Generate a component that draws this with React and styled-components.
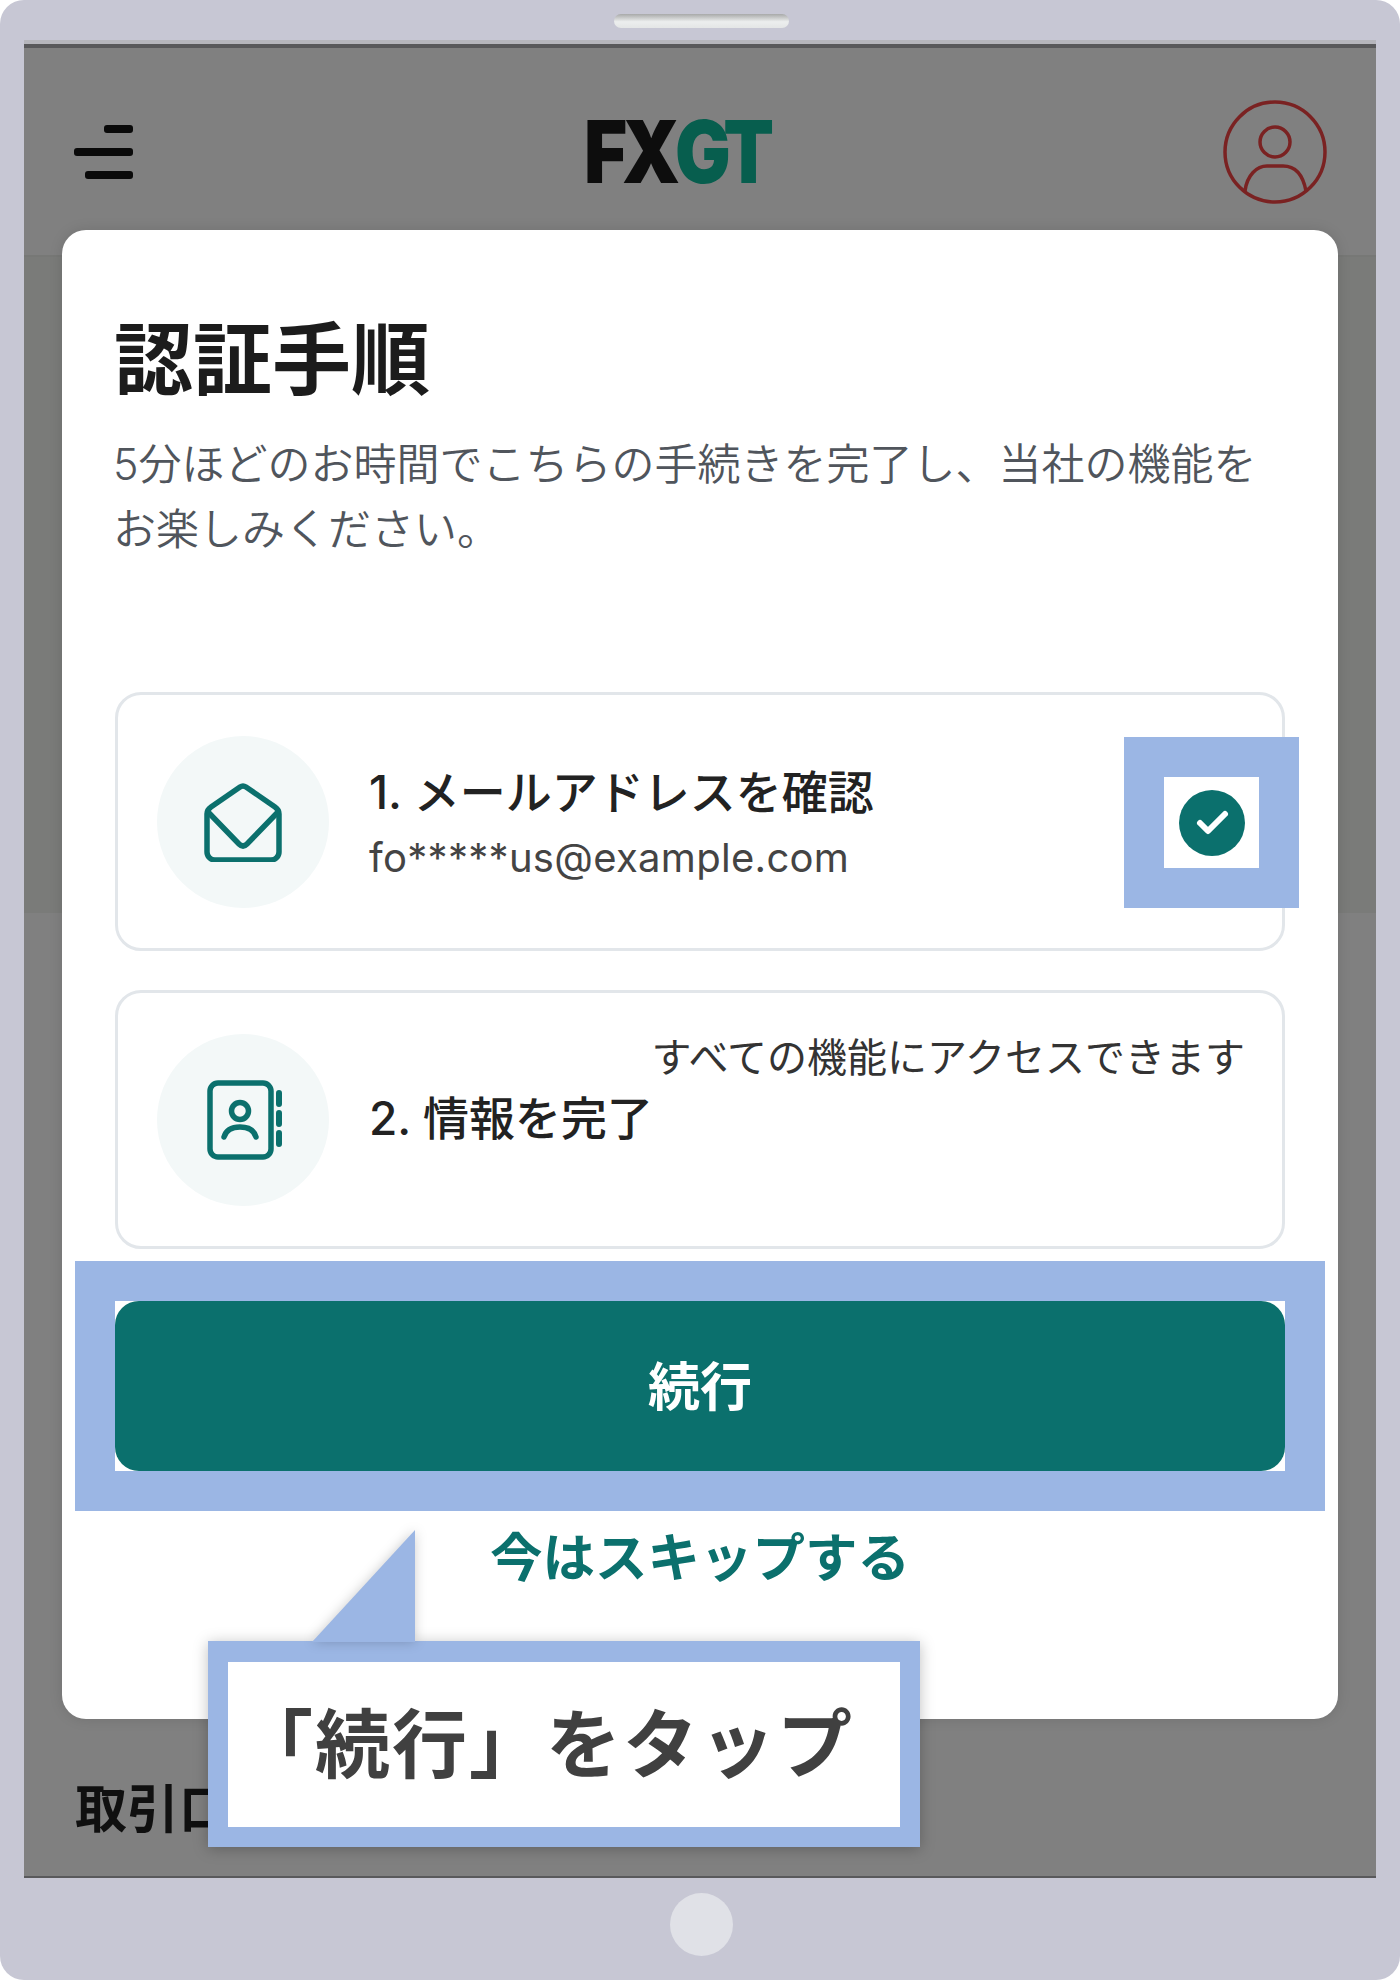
import React from 'react'
import styled, { createGlobalStyle } from 'styled-components'

const teal = '#0b706d'
const blue = '#9bb6e4'
const cjk = `"Noto Sans CJK JP", "Noto Sans", sans-serif`
const latin = `Inter, "Noto Sans CJK JP", sans-serif`

const GlobalStyle = createGlobalStyle`
  html, body {
    margin: 0;
    padding: 0;
    background: #fff;
  }
  * {
    box-sizing: border-box;
  }
`

const Device = styled.div`
  position: relative;
  width: 1400px;
  height: 1980px;
  border-radius: 24px;
  background: #c7c7d4;
  padding: 0 24px;
  display: flex;
  flex-direction: column;
  font-family: ${cjk};
  overflow: hidden;
`

const TopBezel = styled.div`
  height: 40px;
  flex: none;
  display: flex;
  justify-content: center;
  align-items: flex-start;
  padding: 14px 0 0 3px;
`

const Speaker = styled.div`
  width: 175px;
  height: 14px;
  border-radius: 7px;
  background: linear-gradient(#a8a9a9, #eceeee 55%, #e4e6e6);
`

const Screen = styled.div`
  flex: none;
  height: 1838px;
  display: flex;
  flex-direction: column;
  background: #808080;
  border-top: 4px solid #b6b6bc;
  border-bottom: 2px solid #59595b;
`

const TopLine = styled.div`
  height: 4px;
  flex: none;
  background: #59595b;
`

const Header = styled.header`
  height: 209px;
  flex: none;
  display: flex;
  align-items: flex-start;
  justify-content: space-between;
  padding: 52px 49px 0 50px;
  border-bottom: 2px solid #777876;
`

const Burger = styled.div`
  width: 59px;
  display: flex;
  flex-direction: column;
  align-items: flex-end;
  gap: 15px;
  padding-top: 25px;
`

const BurgerBar = styled.span`
  display: block;
  height: 8px;
  width: ${(props) => props.$width}px;
  border-radius: 3px;
  background: #0a0a0a;
`

const Logo = styled.div`
  width: 184px;
  height: 62px;
  margin: 21px 5px 0 0;
  display: flex;
  align-items: center;
  font-family: Inter, "Liberation Sans", sans-serif;
  font-weight: 900;
  font-size: 86px;
  line-height: 62px;
  letter-spacing: -6px;
  white-space: nowrap;
  transform: scaleX(0.86);
  transform-origin: left center;
`

const LogoPart = styled.span`
  color: ${(props) => props.$color};
`

const Avatar = styled.svg`
  display: block;
  width: 104px;
  height: 104px;
`

const Shaded = styled.div`
  height: 656px;
  flex: none;
  background: #7a7b79;
`

const Lower = styled.div`
  flex: 1;
  display: flex;
  align-items: flex-end;
  padding: 0 0 40px 51px;
`

const LowerTitle = styled.div`
  font-size: 52px;
  font-weight: 700;
  line-height: 60px;
  color: #101010;
`

const Modal = styled.section`
  position: absolute;
  left: 62px;
  top: 230px;
  width: 1276px;
  height: 1489px;
  background: #fff;
  border-radius: 24px;
  padding: 75px 53px 0;
  box-shadow: 0 0 14px rgba(0, 0, 0, 0.12);
`

const Title = styled.h1`
  margin: 0;
  font-size: 79px;
  line-height: 100px;
  font-weight: 700;
  color: #1c1c1c;
  margin-left: -1px;
`

const Intro = styled.p`
  margin: 27px 0 130px -2px;
  font-size: 43px;
  line-height: 65px;
  font-weight: 350;
  color: #50555c;
  white-space: nowrap;
  font-family: ${latin};
`

const Steps = styled.div`
  display: flex;
  flex-direction: column;
  gap: 39px;
`

const Step = styled.div`
  position: relative;
  height: 259px;
  border: 3px solid #e2e6ea;
  border-radius: 26px;
  display: flex;
  align-items: center;
  padding-left: 39px;
  gap: 40px;
`

const IconCircle = styled.div`
  width: 172px;
  height: 172px;
  flex: none;
  border-radius: 50%;
  background: #f3f8f8;
  display: flex;
  align-items: center;
  justify-content: center;
`

const StepBody = styled.div`
  flex: 1;
  display: flex;
  flex-direction: column;
  padding: 4px 40px 0 0;
`

const StepNote = styled.div`
  align-self: flex-end;
  font-size: 40px;
  line-height: 60px;
  color: #333;
  margin: -69px -3px 2px 0;
  white-space: nowrap;
`

const StepTitle = styled.div`
  font-size: 46px;
  line-height: 62px;
  font-weight: 500;
  color: #222;
  white-space: nowrap;
  font-family: ${latin};
`

const StepEmail = styled.div`
  margin-top: 6px;
  font-size: 40px;
  line-height: 58px;
  letter-spacing: 0.3px;
  color: #444;
  font-family: ${latin};
`

const CheckMark = styled.div`
  position: absolute;
  left: 1046px;
  top: 82px;
  width: 95px;
  height: 91px;
  background: #fff;
  outline: 40px solid ${blue};
  display: flex;
  align-items: center;
  justify-content: center;
`

const ButtonFrame = styled.div`
  margin-top: 52px;
  background: #fff;
  outline: 40px solid ${blue};
`

const ContinueButton = styled.button`
  display: block;
  width: 100%;
  height: 170px;
  border: 0;
  border-radius: 24px;
  padding: 0 0 6px;
  background: ${teal};
  color: #fff;
  font-family: ${cjk};
  font-size: 52px;
  font-weight: 700;
`

const Skip = styled.div`
  margin-top: 48px;
  text-align: center;
  font-size: 52.5px;
  line-height: 70px;
  font-weight: 700;
  color: ${teal};
`

const Callout = styled.div`
  position: absolute;
  left: 208px;
  top: 1641px;
  width: 712px;
  height: 206px;
  background: #fff;
  border: solid ${blue};
  border-width: 21px 20px 20px;
  box-shadow: 0 2px 14px rgba(0, 0, 0, 0.25);
  display: flex;
  align-items: center;
  padding: 0 0 10px 10px;
  font-size: 75px;
  font-weight: 700;
  letter-spacing: 2px;
  color: #404040;
  white-space: nowrap;
`

const CalloutTail = styled.svg`
  position: absolute;
  left: 84px;
  top: -132px;
  width: 103px;
  height: 112px;
  filter: drop-shadow(0 0 6px rgba(0, 0, 0, 0.2));
`

const HomeBezel = styled.div`
  flex: 1;
  display: flex;
  justify-content: center;
  padding: 15px 0 0 3px;
`

const HomeButton = styled.div`
  width: 63px;
  height: 63px;
  border-radius: 50%;
  background: #e0e1e7;
`

export default function App() {
  return (
    <Device>
      <GlobalStyle />
      <TopBezel>
        <Speaker />
      </TopBezel>
      <Screen>
        <TopLine />
        <Header>
          <Burger>
            <BurgerBar $width={29} />
            <BurgerBar $width={59} />
            <BurgerBar $width={48} />
          </Burger>
          <Logo>
            <LogoPart $color="#0d0d0d">FX</LogoPart>
            <LogoPart $color="#075e4e">GT</LogoPart>
          </Logo>
          <Avatar viewBox="0 0 104 104" fill="none" stroke="#7a2222" strokeWidth="3.5">
            <circle cx="52" cy="52" r="50" />
            <circle cx="52" cy="42" r="15" />
            <path d="M22 91C24 75 34 66 44 66H60C72 66 80 75 83 91" />
          </Avatar>
        </Header>
        <Shaded />
        <Lower>
          <LowerTitle>取引口座</LowerTitle>
        </Lower>
      </Screen>
      <HomeBezel>
        <HomeButton />
      </HomeBezel>

      <Modal>
        <Title>認証手順</Title>
        <Intro>
          5分ほどのお時間でこちらの手続きを完了し、当社の機能を
          <br />
          お楽しみください。
        </Intro>
        <Steps>
          <Step>
            <IconCircle>
              <svg width="78" height="80" viewBox="0 0 78 80" fill="none" stroke={teal} strokeWidth="5.5" strokeLinejoin="round" strokeLinecap="round">
                <path d="M3 32C3 29 4 27 7 25L36 5Q39 3 42 5L71 25C74 27 75 29 75 32V70A8 8 0 0 1 67 78H11A8 8 0 0 1 3 70Z" />
                <path d="M5 31L35 62Q39 66 43 62L73 31" />
              </svg>
            </IconCircle>
            <StepBody>
              <StepTitle>1. メールアドレスを確認</StepTitle>
              <StepEmail>fo*****us@example.com</StepEmail>
            </StepBody>
            <CheckMark>
              <svg width="66" height="66" viewBox="0 0 66 66">
                <circle cx="33" cy="33" r="33" fill={teal} />
                <path d="M21 33L29 41L46 24" fill="none" stroke="#fff" strokeWidth="6" strokeLinecap="round" strokeLinejoin="round" />
              </svg>
            </CheckMark>
          </Step>
          <Step>
            <IconCircle>
              <svg width="78" height="80" viewBox="0 0 78 80" fill="none" stroke={teal} strokeWidth="5.5" strokeLinecap="round">
                <rect x="6" y="3" width="61" height="74" rx="8" />
                <circle cx="36" cy="31" r="8.5" />
                <path d="M20 57C22 50 28 47 36 47S50 50 52 57" />
                <path d="M75 13V24M75 33V44M75 53V64" strokeWidth="6" />
              </svg>
            </IconCircle>
            <StepBody>
              <StepNote>すべての機能にアクセスできます</StepNote>
              <StepTitle>2. 情報を完了</StepTitle>
            </StepBody>
          </Step>
        </Steps>
        <ButtonFrame>
          <ContinueButton>続行</ContinueButton>
        </ButtonFrame>
        <Skip>今はスキップする</Skip>
      </Modal>

      <Callout>
        <CalloutTail viewBox="0 0 103 112">
          <path d="M0 112L103 0V112Z" fill={blue} />
        </CalloutTail>
        「続行」をタップ
      </Callout>
    </Device>
  )
}
